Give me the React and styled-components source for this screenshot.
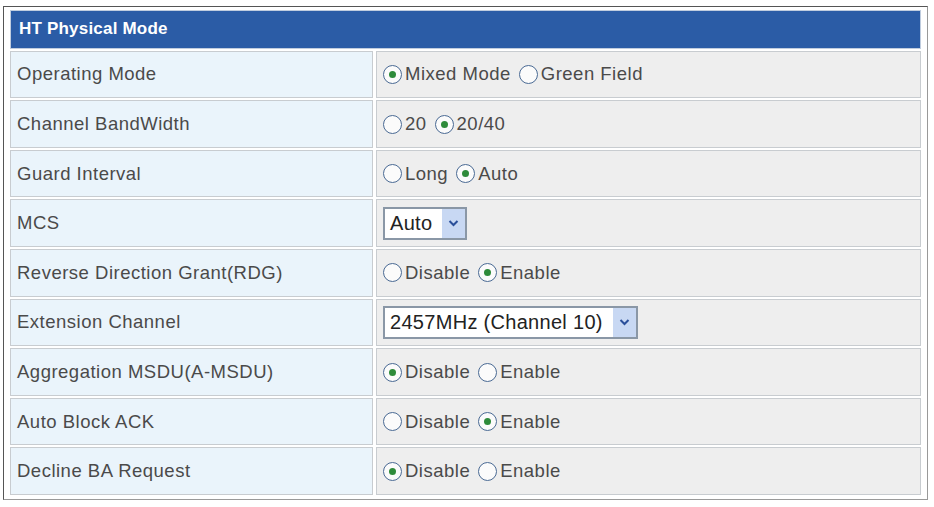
import React from "react";
import styled, { createGlobalStyle } from "styled-components";

const G = createGlobalStyle`
  body { margin: 0; background: #fff; font-family: "Liberation Sans", Arial, sans-serif; }
`;
const Outer = styled.div`
  margin: 6px 4px 0 3px; width: 925px; height: 494px; box-sizing: border-box;
  border: 1px solid #555; border-right-color: #999; border-bottom-color: #999;
  background: #fff; padding: 3px 6px 4px 6px; display: flex; flex-direction: column; gap: 2px;
`;
const Header = styled.div`
  height: 37px; background: #2b5ca6; color: #fff; font-weight: bold; font-size: 17px;
  display: flex; align-items: center; padding-left: 8px; border: 1px solid #c0cddf; letter-spacing: 0.2px;
`;
const Row = styled.div`
  display: grid; grid-template-columns: 363px 1fr; gap: 3px; height: 48px;
`;
const Cell = styled.div`
  border: 1px solid #c8ccd0; display: flex; align-items: center; font-size: 18.5px; color: #4a4a4a;
  letter-spacing: 0.5px;
  background: ${p => (p.$label ? "#eaf4fb" : "#eeeeee")};
  padding-left: 6px; gap: 8px;
`;
const Opt = styled.span`display: inline-flex; align-items: center; gap: 3px;`;
const Radio = styled.span`
  width: 19px; height: 19px; border-radius: 50%; border: 1.5px solid #4a6a94; box-sizing: border-box;
  background: #fbfbfb; display: inline-flex; align-items: center; justify-content: center;
  &::after { content: ""; width: 7px; height: 7px; border-radius: 50%; background: ${p => (p.$on ? "#2e8b3a" : "transparent")}; }
`;
const Select = styled.div`
  display: inline-flex; align-items: center; border: 2px solid #8a97a6; background: #fff; height: 33px;
  box-sizing: border-box; font-size: 20px; color: #222; padding-left: 5px; letter-spacing: 0.3px;
`;
const Arrow = styled.span`
  width: 23px; height: 100%; background: #c8d8f3; margin-left: 10px; display: flex; align-items: center; justify-content: center;
`;

const R = ({ opts, on }) => opts.map((o, i) => (
  <Opt key={o}><Radio $on={i === on} />{o}</Opt>
));
const Sel = ({ v }) => (
  <Select>{v}<Arrow><svg width="11" height="7" viewBox="0 0 10 7"><path d="M1 1l4 4 4-4" stroke="#2a4f9a" strokeWidth="2" fill="none"/></svg></Arrow></Select>
);

const rows = [
  ["Operating Mode", <R opts={["Mixed Mode", "Green Field"]} on={0} />],
  ["Channel BandWidth", <R opts={["20", "20/40"]} on={1} />],
  ["Guard Interval", <R opts={["Long", "Auto"]} on={1} />],
  ["MCS", <Sel v="Auto" />],
  ["Reverse Direction Grant(RDG)", <R opts={["Disable", "Enable"]} on={1} />],
  ["Extension Channel", <Sel v="2457MHz (Channel 10)" />],
  ["Aggregation MSDU(A-MSDU)", <R opts={["Disable", "Enable"]} on={0} />],
  ["Auto Block ACK", <R opts={["Disable", "Enable"]} on={1} />],
  ["Decline BA Request", <R opts={["Disable", "Enable"]} on={0} />],
];

export default function App() {
  return (
    <>
      <G />
      <Outer>
        <Header>HT Physical Mode</Header>
        {rows.map(([l, v]) => (
          <Row key={l}><Cell $label>{l}</Cell><Cell>{v}</Cell></Row>
        ))}
      </Outer>
    </>
  );
}
